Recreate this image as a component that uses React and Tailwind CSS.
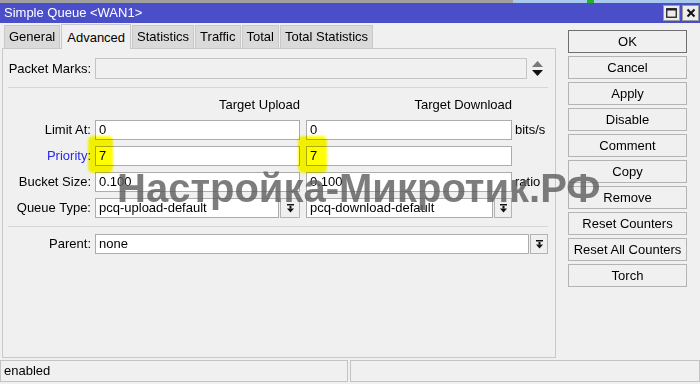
import React from 'react';

const tabs = ['General', 'Advanced', 'Statistics', 'Traffic', 'Total', 'Total Statistics'];
const buttons = ['OK', 'Cancel', 'Apply', 'Disable', 'Comment', 'Copy', 'Remove', 'Reset Counters', 'Reset All Counters', 'Torch'];

// little "bar over arrow" glyph used by the combo boxes
function DropIcon() {
  return (
    <svg width="9" height="9" viewBox="0 0 9 9">
      <rect x="1" y="0" width="7" height="1.5" fill="#111" />
      <rect x="3.5" y="2" width="2" height="2.5" fill="#111" />
      <polygon points="1,4.5 8,4.5 4.5,8.5" fill="#111" />
    </svg>
  );
}

function Row({ label, blue, children }) {
  return (
    <div className="flex h-[20px] items-center">
      <div className={`w-[88px] whitespace-nowrap text-right ${blue ? 'text-[#2a2ae6]' : 'text-black'}`}>{label}</div>
      <div className="ml-[4px] flex h-full items-center">{children}</div>
    </div>
  );
}

function Input({ className, value }) {
  return (
    <div className={`h-[20px] border border-[#acacac] bg-white pl-[3px] leading-[18px] ${className}`}>{value}</div>
  );
}

function DropBtn({ className }) {
  return (
    <div className={`flex h-[20px] items-center justify-center border border-[#b4b4b4] bg-[#f0f0f0] ${className}`}>
      <DropIcon />
    </div>
  );
}

export default function App() {
  return (
    <div className="relative h-[384px] w-[700px] overflow-hidden bg-[#f0f0f0] font-['Liberation_Sans',Arial,sans-serif] text-[13px] text-black">
      {/* strip of the window behind */}
      <div className="flex h-[3px]">
        <div className="w-[513px] bg-[#a0a0a0]" />
        <div className="relative flex-1 bg-[#a9c8ee]">
          <div className="absolute left-[74px] top-0 h-[3px] w-[7px] bg-[#22b422]" />
        </div>
      </div>

      {/* title bar */}
      <div className="flex h-[20px] items-center bg-[#4b4ec9] pl-[4px] pr-[1px] text-white">
        <span className="flex-1">Simple Queue &lt;WAN1&gt;</span>
        <div className="flex gap-[2px]">
          <div className="flex h-[16px] w-[17px] items-center justify-center border border-[#9a9a9a] bg-[#ececec]">
            <svg width="11" height="10" viewBox="0 0 11 10">
              <rect x="0.75" y="0.75" width="9.5" height="8.5" fill="none" stroke="#222" strokeWidth="1.3" />
              <rect x="0.5" y="0.5" width="10" height="2" fill="#222" />
            </svg>
          </div>
          <div className="flex h-[16px] w-[17px] items-center justify-center border border-[#9a9a9a] bg-[#ececec]">
            <svg width="10" height="10" viewBox="0 0 10 10">
              <path d="M1.5 1.5 L8.5 8.5 M8.5 1.5 L1.5 8.5" stroke="#111" strokeWidth="2" />
            </svg>
          </div>
        </div>
      </div>

      <div className="flex">
        {/* left: tabs + panel */}
        <div className="w-[556px] pl-[2px]">
          <div className="flex h-[25px] items-end gap-[1px] pl-[2px]">
            {tabs.map((t) =>
              t === 'Advanced' ? (
                <div key={t} className="relative z-10 -mb-px flex h-[25px] items-start border border-b-0 border-[#c9c9c9] bg-[#f0f0f0] px-[5px] pt-[3px]">
                  {t}
                </div>
              ) : (
                <div key={t} className="flex h-[23px] items-center border border-b-0 border-[#c9c9c9] bg-[#dadada] px-[4px]">
                  {t}
                </div>
              )
            )}
          </div>

          <div className="h-[310px] w-[554px] border border-[#c9c9c9]">
            <div className="mt-[9px] flex h-[21px] items-center">
              <div className="w-[88px] text-right">Packet Marks:</div>
              <div className="ml-[4px] h-[21px] w-[432px] border border-[#c4c4c4] bg-[#f0f0f0]" />
              <svg className="ml-[5px]" width="11" height="15" viewBox="0 0 11 15">
                <polygon points="5.5,0 11,6 0,6" fill="#7a7a7a" />
                <polygon points="0,9 11,9 5.5,15" fill="#111" />
              </svg>
            </div>

            <div className="ml-[5px] mt-[8px] h-px w-[540px] bg-[#d6d6d6]" />

            <div className="mt-[9px] flex h-[16px] items-center leading-[16px]">
              <div className="w-[92px]" />
              <div className="w-[205px] text-right">Target Upload</div>
              <div className="ml-[6px] w-[206px] text-right">Target Download</div>
            </div>

            <div className="mt-[7px] flex flex-col gap-[6px]">
              <Row label="Limit At:">
                <Input className="w-[205px]" value="0" />
                <Input className="ml-[6px] w-[206px]" value="0" />
                <span className="ml-[3px]">bits/s</span>
              </Row>
              <Row label="Priority:" blue>
                <Input className="w-[205px]" value="7" />
                <Input className="ml-[6px] w-[206px]" value="7" />
              </Row>
              <Row label="Bucket Size:">
                <Input className="w-[205px]" value="0.100" />
                <Input className="ml-[6px] w-[206px]" value="0.100" />
                <span className="ml-[3px]">ratio</span>
              </Row>
              <Row label="Queue Type:">
                <Input className="w-[184px]" value="pcq-upload-default" />
                <DropBtn className="ml-px w-[20px]" />
                <Input className="ml-[6px] w-[187px]" value="pcq-download-default" />
                <DropBtn className="ml-px w-[18px]" />
              </Row>
            </div>

            <div className="ml-[5px] mt-[8px] h-px w-[540px] bg-[#d6d6d6]" />

            <div className="mt-[7px]">
              <Row label="Parent:">
                <Input className="w-[434px]" value="none" />
                <DropBtn className="ml-px w-[18px]" />
              </Row>
            </div>
          </div>
        </div>

        {/* right: buttons */}
        <div className="ml-[12px] mt-[7px] flex w-[119px] flex-col gap-[3px]">
          {buttons.map((b) => (
            <div
              key={b}
              className={`flex h-[23px] items-center justify-center whitespace-nowrap border bg-[#f0f0f0] ${b === 'OK' ? 'border-[#6f6f6f]' : 'border-[#b4b4b4]'}`}
            >
              {b}
            </div>
          ))}
        </div>
      </div>

      {/* status bar */}
      <div className="mt-[2px] flex h-[22px] gap-[2px]">
        <div className="flex w-[348px] items-center border border-[#c4c4c4] pl-[3px]">enabled</div>
        <div className="flex-1 border border-[#c4c4c4]" />
      </div>

      {/* yellow marker highlights */}
      <div className="absolute left-[88px] top-[136px] h-[37px] w-[25px] rounded-[5px] bg-[#ffff00] mix-blend-multiply blur-[1px]" />
      <div className="absolute left-[298px] top-[136px] h-[37px] w-[29px] rounded-[5px] bg-[#ffff00] mix-blend-multiply blur-[1px]" />

      {/* watermark */}
      <div className="pointer-events-none absolute left-[117px] top-[168px] whitespace-nowrap text-[40px] font-bold leading-none text-[#5c5c5c]/80">
        Настройка-Микротик.РФ
      </div>
    </div>
  );
}
